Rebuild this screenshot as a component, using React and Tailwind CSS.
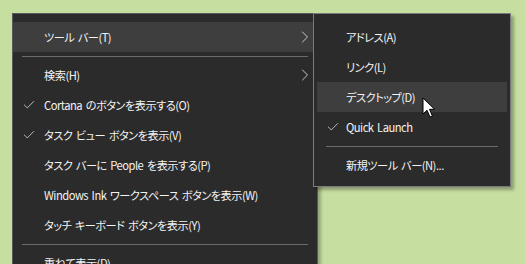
import { Check, ChevronRight } from 'lucide-react'

const font = "font-['Yu_Gothic_UI','Noto_Sans_CJK_JP',sans-serif] [font-feature-settings:'palt']"

const mainItems = [
  { label: 'ツール バー(T)', sub: true, active: true },
  { sep: true },
  { label: '検索(H)', sub: true },
  { label: 'Cortana のボタンを表示する(O)', checked: true },
  { label: 'タスク ビュー ボタンを表示(V)', checked: true },
  { label: 'タスク バーに People を表示する(P)' },
  { label: 'Windows Ink ワークスペース ボタンを表示(W)' },
  { label: 'タッチ キーボード ボタンを表示(Y)' },
  { sep: true },
  { label: '重ねて表示(D)' },
]

const subItems = [
  { label: 'アドレス(A)' },
  { label: 'リンク(L)' },
  { label: 'デスクトップ(D)', active: true },
  { label: 'Quick Launch', checked: true },
  { sep: true },
  { label: '新規ツール バー(N)...' },
]

function MenuRow({ item, pad }) {
  if (item.sep) {
    return (
      <div className="h-[8px] flex items-center px-[9px]">
        <div className="h-px w-full bg-[#6b6b6b]" />
      </div>
    )
  }
  return (
    <div className={`h-[30px] flex items-center relative ${item.active ? 'bg-[#3e3e3e]' : ''}`}>
      {item.checked && (
        <Check size={14} strokeWidth={1.3} className="absolute left-[9px] text-[#dfe6f0]" />
      )}
      <span className={`${pad} text-[11.2px] tracking-[-0.5px] [word-spacing:1.5px] text-[#f4f4f4] whitespace-nowrap`}>{item.label}</span>
      {item.sub && (
        <ChevronRight size={20} strokeWidth={1} className="absolute right-[2px] text-[#e6e6e6]" />
      )}
    </div>
  )
}

export default function App() {
  return (
    <div className={`relative w-[525px] h-[264px] overflow-hidden bg-[#c6dfa0] ${font}`}>
      <div className="pl-[12px] pt-[13px]">
        <div className="w-[306px] h-[270px] bg-[#2b2b2b] border border-[#595959] pt-[8px] shadow-[3px_3px_3px_rgba(0,0,0,0.25)]">
          {mainItems.map((it, i) => (
            <MenuRow key={i} item={it} pad="pl-[31px]" />
          ))}
        </div>
      </div>

      <div className="absolute left-[313px] top-[13px] w-[198px] h-[174px] bg-[#2b2b2b] border border-[#7a7a7a] pt-[8px] px-[3px] shadow-[3px_3px_3px_rgba(0,0,0,0.3)]">
        {subItems.map((it, i) => (
          <MenuRow key={i} item={it} pad="pl-[29px]" />
        ))}
      </div>

      <svg className="absolute left-[422px] top-[97px]" width="14" height="22" viewBox="0 0 14 22">
        <path d="M1 1 L1 17 L5 13.2 L8 20 L10.4 19 L7.5 12.3 L12.6 12.3 Z" fill="#fff" stroke="#000" strokeWidth="1" strokeLinejoin="round" />
      </svg>
    </div>
  )
}
